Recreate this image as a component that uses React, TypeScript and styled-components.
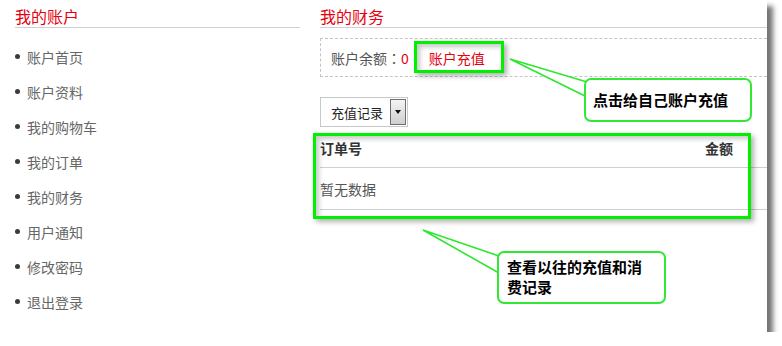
import React from "react";
import styled, { createGlobalStyle } from "styled-components";

const GlobalStyle = createGlobalStyle`
  html, body { margin: 0; padding: 0; background: #fff; }
  body { font-family: "Noto Sans CJK SC", "Liberation Sans", sans-serif; }
  * { box-sizing: border-box; }
`;

const Frame = styled.div`
  position: relative;
  display: flex;
  gap: 20px;
  width: 767px;
  height: 332px;
  padding-left: 15px;
  background: #fff;
  box-shadow: 6px 6px 5px rgba(0, 0, 0, 0.55);
  overflow: visible;
`;

const Column = styled.div<{ $width?: number }>`
  display: flex;
  flex-direction: column;
  ${(p) => (p.$width ? `width: ${p.$width}px; flex: none;` : `flex: 1; min-width: 0;`)}
`;

const SectionTitle = styled.h2`
  margin: 0;
  padding: 6px 0 1px;
  font-size: 16px;
  font-weight: normal;
  line-height: 20px;
  color: #e5000f;
  border-bottom: 1px solid #cfcfcf;
`;

const Menu = styled.ul`
  list-style: none;
  margin: 11px 0 0;
  padding: 0;
`;

const MenuItem = styled.li`
  display: flex;
  align-items: center;
  gap: 7px;
  height: 35px;
  font-size: 14px;
  color: #666;
  &::before {
    content: "";
    width: 5px;
    height: 5px;
    border-radius: 50%;
    background: #3a3a3a;
  }
`;

const BalanceBox = styled.div`
  display: flex;
  align-items: center;
  height: 39px;
  margin-top: 10px;
  padding-left: 10px;
  border: 1px dashed #c4c4c4;
  border-right: none;
  font-size: 14px;
  color: #555;
  white-space: nowrap;
  & > * {
    flex: none;
  }
`;

const Colon = styled.span`
  font-family: "Noto Sans CJK TC", "Noto Sans CJK SC", sans-serif;
`;

const Red = styled.span`
  color: #e5000f;
`;

const RechargeLink = styled.a`
  margin-left: 20px;
  color: #e5000f;
  text-decoration: none;
`;

const Select = styled.div`
  display: flex;
  align-items: center;
  justify-content: space-between;
  width: 88px;
  height: 30px;
  margin-top: 20px;
  padding: 1px 1px 1px 10px;
  border: 1px solid #c8c8c8;
  font-size: 13px;
  color: #222;
`;

const SelectButton = styled.span`
  display: flex;
  align-items: center;
  justify-content: center;
  width: 16px;
  height: 100%;
  border: 1px solid #6f6f6f;
  background: linear-gradient(#f4f4f4, #cfcfcf);
  &::after {
    content: "";
    border-left: 3px solid transparent;
    border-right: 3px solid transparent;
    border-top: 4px solid #111;
  }
`;

const Table = styled.div`
  margin-top: 1px;
  display: flex;
  flex-direction: column;
`;

const Row = styled.div<{ $height: number; $head?: boolean }>`
  display: flex;
  align-items: center;
  justify-content: space-between;
  height: ${(p) => p.$height}px;
  padding-right: 34px;
  border-bottom: 1px solid #cfcfcf;
  font-size: 14px;
  font-weight: ${(p) => (p.$head ? 700 : 400)};
  color: ${(p) => (p.$head ? "#333" : "#555")};
`;

const Highlight = styled.div<{ $l: number; $t: number; $w: number; $h: number }>`
  position: absolute;
  left: ${(p) => p.$l}px;
  top: ${(p) => p.$t}px;
  width: ${(p) => p.$w}px;
  height: ${(p) => p.$h}px;
  border: 3px solid #00f000;
  box-shadow: 3px 3px 5px rgba(0, 0, 0, 0.3), inset 3px 3px 5px rgba(0, 0, 0, 0.22);
  pointer-events: none;
`;

const Tails = styled.svg`
  position: absolute;
  left: 0;
  top: 0;
  width: 782px;
  height: 346px;
  pointer-events: none;
`;

const Callout = styled.div<{ $l: number; $t: number; $w: number; $h: number; $top?: boolean }>`
  position: absolute;
  left: ${(p) => p.$l}px;
  top: ${(p) => p.$t}px;
  width: ${(p) => p.$w}px;
  height: ${(p) => p.$h}px;
  padding: ${(p) => (p.$top ? "4px 12px 0 8px" : "0 12px 0 7px")};
  display: flex;
  align-items: ${(p) => (p.$top ? "flex-start" : "center")};
  border: 2px solid #33e833;
  border-radius: 7px;
  background: #fff;
  font-size: 15px;
  font-weight: 700;
  line-height: 20px;
  color: #000;
`;

export default function App() {
  return (
    <>
      <GlobalStyle />
      <Frame>
        <Column $width={285}>
          <SectionTitle>我的账户</SectionTitle>
          <Menu>
            {["账户首页", "账户资料", "我的购物车", "我的订单", "我的财务", "用户通知", "修改密码", "退出登录"].map(
              (t) => (
                <MenuItem key={t}>{t}</MenuItem>
              )
            )}
          </Menu>
        </Column>
        <Column>
          <SectionTitle>我的财务</SectionTitle>
          <BalanceBox>
            <span>
              账户余额<Colon>：</Colon>
            </span>
            <Red>0</Red>
            <RechargeLink href="#">账户充值</RechargeLink>
          </BalanceBox>
          <Select>
            充值记录
            <SelectButton />
          </Select>
          <Table>
            <Row $height={40} $head>
              <span>订单号</span>
              <span>金额</span>
            </Row>
            <Row $height={42}>
              <span>暂无数据</span>
            </Row>
          </Table>
        </Column>

        <Highlight $l={414} $t={41} $w={90} $h={32} />
        <Highlight $l={313} $t={133} $w={438} $h={86} />
        <Tails viewBox="0 0 782 346">
          <polygon points="510,59 587,82 587,97" fill="#fff" />
          <polyline points="587,82 510,59 587,97" fill="none" stroke="#2ee82e" strokeWidth="1.6" />
          <polygon points="423,230 499,256 499,273" fill="#fff" />
          <polyline points="499,256 423,230 499,273" fill="none" stroke="#2ee82e" strokeWidth="1.6" />
        </Tails>
        <Callout $l={584} $t={78} $w={168} $h={44}>
          点击给自己账户充值
        </Callout>
        <Callout $l={497} $t={251} $w={169} $h={53} $top>
          查看以往的充值和消费记录
        </Callout>
      </Frame>
    </>
  );
}
